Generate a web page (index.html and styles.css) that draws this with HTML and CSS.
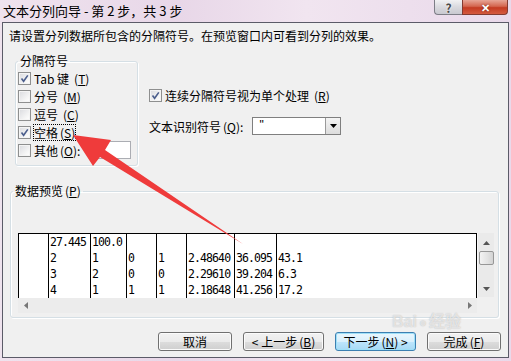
FILE: index.html
```html
<!DOCTYPE html>
<html lang="zh-CN">
  <head>
    <meta charset="UTF-8" />
    <meta name="viewport" content="width=device-width, initial-scale=1.0" />
    <title>文本分列向导</title>
    <link rel="stylesheet" href="styles.css">
  </head>
  <body>
    <div class="window">
      <div class="titlebar">
        <span class="title">文本分列向导 - 第 2 步，共 3 步</span>
        <div class="caption">
          <span class="cap help">?</span>
          <span class="cap close">✕</span>
        </div>
      </div>

      <div class="client">
        <p class="intro">请设置分列数据所包含的分隔符号。在预览窗口内可看到分列的效果。</p>

        <div class="middle">
          <fieldset class="group delims">
            <legend>分隔符号</legend>
            <label class="opt"><span class="box checked"><svg viewBox="0 0 11 11"><path d="M2.5 5.5 L4.6 8.3 L8.8 2.4"/></svg></span>Tab 键<span class="key">(<u>T</u>)</span></label>
            <label class="opt"><span class="box"></span>分号<span class="key">(<u>M</u>)</span></label>
            <label class="opt"><span class="box"></span>逗号<span class="key">(<u>C</u>)</span></label>
            <label class="opt"><span class="box checked"><svg viewBox="0 0 11 11"><path d="M2.5 5.5 L4.6 8.3 L8.8 2.4"/></svg></span><span class="focus">空格<span class="key">(<u>S</u>)</span></span></label>
            <label class="opt"><span class="box"></span><span>其他<span class="key">(<u>O</u>)</span>:</span><span class="field"></span></label>
          </fieldset>

          <div class="options">
            <label class="opt"><span class="box checked"><svg viewBox="0 0 11 11"><path d="M2.5 5.5 L4.6 8.3 L8.8 2.4"/></svg></span>连续分隔符号视为单个处理<span class="key">(<u>R</u>)</span></label>
            <div class="qualifier">
              <span>文本识别符号<span class="key">(<u>Q</u>)</span>:</span>
              <span class="combo">
                <span class="combo-value">"</span>
                <span class="combo-btn"><svg viewBox="0 0 7 4"><path d="M0 0 H7 L3.5 4 Z"/></svg></span>
              </span>
            </div>
          </div>
        </div>

        <fieldset class="group preview">
          <legend>数据预览<span class="key">(<u>P</u>)</span></legend>
          <div class="list">
            <div class="list-main">
              <table class="grid">
                <colgroup>
                  <col style="width:30px"><col style="width:42px"><col style="width:36px"><col style="width:30px">
                  <col style="width:30px"><col style="width:48px"><col style="width:42px"><col>
                </colgroup>
                <tr><td></td><td>27.445</td><td>100.0</td><td></td><td></td><td></td><td></td><td></td></tr>
                <tr><td></td><td>2</td><td>1</td><td>0</td><td>1</td><td>2.48640</td><td>36.095</td><td>43.1</td></tr>
                <tr><td></td><td>3</td><td>2</td><td>0</td><td>0</td><td>2.29610</td><td>39.204</td><td>6.3</td></tr>
                <tr><td></td><td>4</td><td>1</td><td>1</td><td>1</td><td>2.18648</td><td>41.256</td><td>17.2</td></tr>
              </table>
              <div class="vscroll">
                <svg class="arr" viewBox="0 0 7 4"><path d="M3.5 0 L7 4 H0 Z"/></svg>
                <span class="thumb"></span>
                <svg class="arr down" viewBox="0 0 7 4"><path d="M0 0 H7 L3.5 4 Z"/></svg>
              </div>
            </div>
            <div class="hscroll">
              <svg class="arr" viewBox="0 0 4 7"><path d="M4 0 V7 L0 3.5 Z"/></svg>
              <svg class="arr" viewBox="0 0 4 7"><path d="M0 0 V7 L4 3.5 Z"/></svg>
            </div>
          </div>
        </fieldset>

        <div class="buttons">
          <button class="btn cancel">取消</button>
          <button class="btn back">&lt; 上一步<span class="key">(<u>B</u>)</span></button>
          <button class="btn next default">下一步<span class="key">(<u>N</u>)</span> &gt;</button>
          <button class="btn finish">完成<span class="key">(<u>F</u>)</span></button>
        </div>
      </div>

      <svg class="arrow" viewBox="0 0 511 361">
        <polygon points="73,135 111,140 105,150 243,244 100,157 93,166" />
      </svg>

      <div class="watermark">Bai<span class="paw">●</span>经验</div>
    </div>
  </body>
</html>
```

FILE: styles.css
```css
* {
  box-sizing: border-box;
}

body {
  margin: 0;
  width: 511px;
  height: 361px;
  overflow: hidden;
  font-family: "Noto Sans CJK SC", "Noto Sans", sans-serif;
  font-size: 12px;
  color: #000;
  background: #dccfe0;
}

.window {
  position: relative;
  width: 511px;
  height: 361px;
  padding: 0 2px 3px 2px;
  display: flex;
  flex-direction: column;
  background: linear-gradient(to right, #efe3ee, #e8d7e8 35%, #f1e5f0 60%, #e9d9ea);
}

.titlebar {
  height: 22px;
  display: flex;
  justify-content: space-between;
  flex-shrink: 0;
}

.title {
  font-size: 13px;
  line-height: 21px;
  padding-left: 1px;
}

.caption {
  display: flex;
  align-self: flex-start;
  margin-right: 1px;
}

.cap {
  height: 15px;
  display: flex;
  justify-content: center;
  align-items: center;
  font-weight: bold;
  border: 1px solid #7d7d86;
  border-top: none;
}

.help {
  width: 28px;
  border-radius: 0 0 0 4px;
  border-right: none;
  background: linear-gradient(#f1f1f3, #d9d9de 50%, #c9c9d0);
  color: #4a4a4a;
  font-size: 12px;
  text-shadow: 0 0 2px #fff;
}

.close {
  width: 46px;
  border-radius: 0 0 4px 0;
  border-color: #833a30;
  background: linear-gradient(#e7a596, #d4664f 45%, #c43b22 55%, #d45a3f);
  color: #fff;
  font-size: 11px;
  text-shadow: 0 0 2px #6b1a10;
}

.client {
  height: 336px;
  border: 1px solid #5b5b68;
  background: #f0f0f0;
}

.intro {
  margin: 6px 0 0 6px;
  line-height: 14px;
}

.key {
  margin-left: 2px;
}

.middle {
  display: flex;
  margin-top: 11px;
  padding-left: 12px;
}

.group {
  margin: 0;
  min-width: 0;
  border: 1px solid #d5dfe5;
  border-radius: 3px;
  box-shadow: inset 1px 1px 0 #fff, 1px 1px 0 #fff;
}

.group legend {
  padding: 0 2px;
  line-height: 14px;
}

.delims {
  width: 123px;
  height: 112px;
  padding: 1px 6px 0 2px;
}

.opt {
  display: flex;
  align-items: center;
  height: 18px;
  gap: 3px;
  white-space: nowrap;
}

.box {
  width: 13px;
  height: 13px;
  flex-shrink: 0;
  border: 1px solid #8e8f8f;
  background: linear-gradient(135deg, #d9dade, #f6f6f6 70%, #ffffff);
  box-shadow: inset 0 0 0 1px #f4f4f4;
}

.box svg {
  display: block;
  width: 11px;
  height: 11px;
}

.box path {
  fill: none;
  stroke: #4b5e8c;
  stroke-width: 1.6;
}

.focus {
  outline: 1px dotted #000;
  outline-offset: -1px;
  padding: 0 1px;
  margin-left: -1px;
}

.field {
  width: 36px;
  height: 18px;
  flex-shrink: 0;
  margin-left: auto;
  border: 1px solid #abadb3;
  background: #fff;
}

.options {
  margin-left: 11px;
  padding-top: 32px;
}

.qualifier {
  display: flex;
  align-items: center;
  gap: 9px;
  height: 18px;
  margin-top: 13px;
}

.combo {
  display: flex;
  width: 89px;
  height: 18px;
  border: 1px solid #7f7f7f;
  background: #fff;
}

.combo-value {
  flex: 1;
  padding-left: 6px;
  line-height: 14px;
  color: #000;
  font-family: "Liberation Sans", sans-serif;
}

.combo-btn {
  width: 15px;
  display: flex;
  justify-content: center;
  align-items: center;
  border-left: 1px solid #9a9a9a;
  background: linear-gradient(#f4f4f4, #dcdcdc);
}

.combo-btn svg {
  width: 7px;
  height: 4px;
  fill: #000;
}

.preview {
  height: 134px;
  margin: 18px 9px 0 7px;
  padding: 35px 0 0 2px;
}

.list {
  margin-left: 5px;
  width: 476px;
}

.list-main {
  display: flex;
  height: 64px;
}

.grid {
  width: 459px;
  height: 64px;
  table-layout: fixed;
  border-collapse: collapse;
  border: 1px solid #000;
  border-bottom: none;
  background: #fff;
  font-family: "DejaVu Sans Mono", "Liberation Mono", monospace;
  font-size: 11.5px;
  letter-spacing: -0.9px;
}

.grid td {
  height: 16px;
  padding: 0 0 0 1px;
  border-left: 1px solid #000;
  line-height: 16px;
  vertical-align: middle;
  white-space: nowrap;
  overflow: hidden;
}

.grid td:first-child {
  border-left: none;
}

.vscroll {
  width: 17px;
  display: flex;
  flex-direction: column;
  align-items: center;
  background: #eaeaea;
  border-left: 1px solid #f7f7f7;
  padding-top: 8px;
}

.arr {
  width: 7px;
  height: 4px;
  fill: #555;
}

.thumb {
  width: 15px;
  height: 14px;
  margin-top: 6px;
  border: 1px solid #979797;
  border-radius: 2px;
  background: linear-gradient(to right, #f3f3f3, #e2e2e2 60%, #d3d3d3);
}

.vscroll .down {
  margin-top: auto;
  margin-bottom: 6px;
}

.hscroll {
  width: 459px;
  height: 16px;
  display: flex;
  justify-content: space-between;
  align-items: center;
  padding: 0 5px 0 6px;
  background: #ececec;
  border-top: 1px solid #f8f8f8;
}

.hscroll .arr {
  width: 4px;
  height: 7px;
  fill: #777;
}

.buttons {
  display: flex;
  justify-content: flex-end;
  gap: 11px;
  margin-top: 14px;
  padding-right: 7px;
}

.btn {
  height: 19px;
  padding: 0;
  border: 1px solid #707070;
  border-radius: 3px;
  background: linear-gradient(#f2f2f2, #ebebeb 50%, #dddddd 50%, #cfcfcf);
  box-shadow: inset 0 0 0 1px #fbfbfb;
  font-family: "Noto Sans CJK SC", "Noto Sans", sans-serif;
  font-size: 12px;
  line-height: 16px;
  color: #000;
}

.cancel,
.finish {
  width: 74px;
}

.back,
.next {
  width: 81px;
}

.btn.default {
  border-color: #3c7fb1;
  box-shadow: inset 0 0 0 1px #9fe0f8;
  background: linear-gradient(#eaf6fd, #d9f0fc 50%, #bee6fd 50%, #a7d9f5);
}

.arrow {
  position: absolute;
  left: 0;
  top: 0;
  width: 511px;
  height: 361px;
  pointer-events: none;
}

.arrow polygon {
  fill: #ef3b3b;
}

/* водяний знак у правому нижньому куті */
.watermark {
  position: absolute;
  left: 392px;
  top: 313px;
  font-family: "Liberation Sans", sans-serif;
  font-size: 16px;
  font-weight: bold;
  line-height: 17px;
  color: rgba(255, 255, 255, 0.6);
  text-shadow: 0 0 1px rgba(120, 120, 120, 0.5);
  pointer-events: none;
  white-space: nowrap;
}

.watermark .paw {
  font-size: 13px;
  margin: 0 2px;
}
```
